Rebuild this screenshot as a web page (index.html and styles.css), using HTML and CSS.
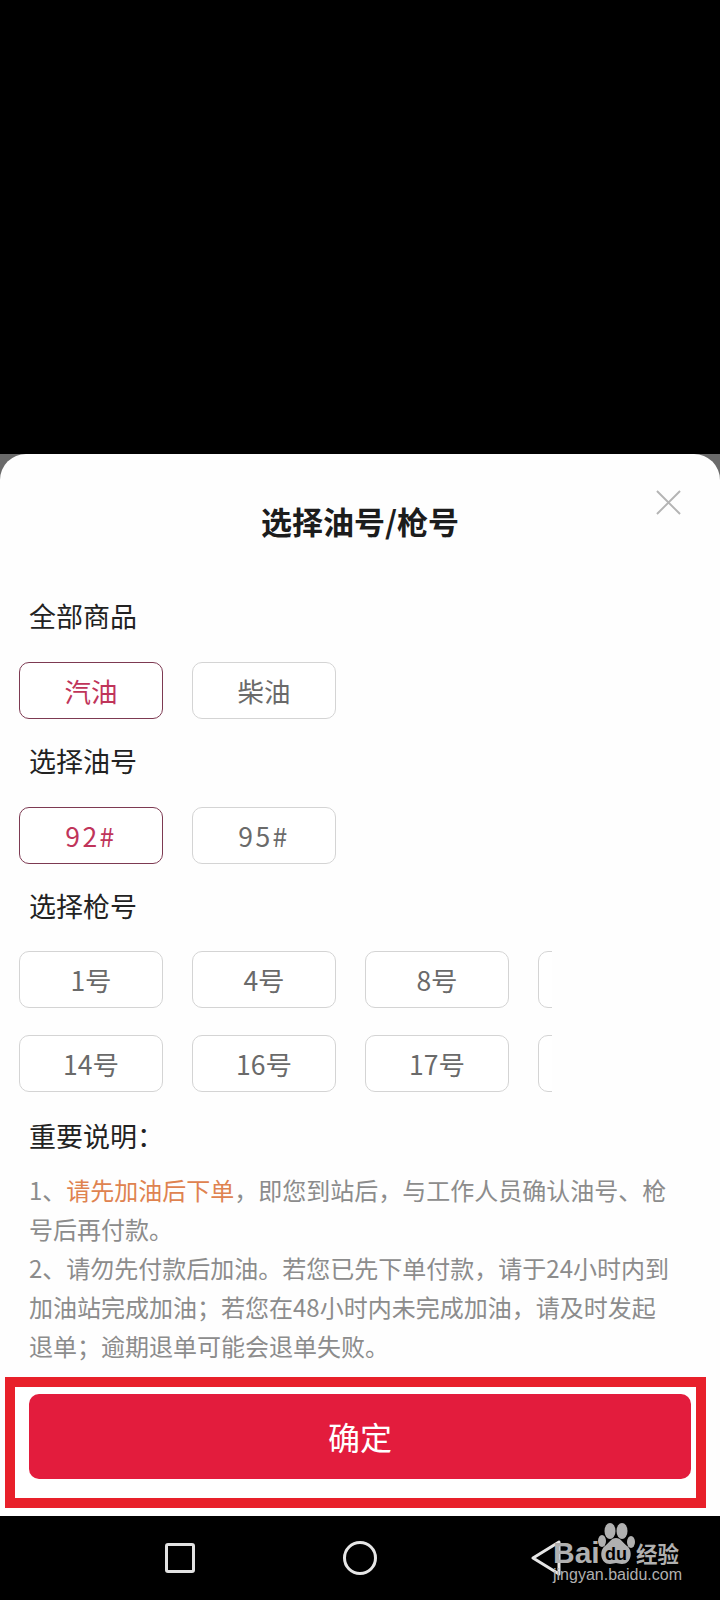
FILE: index.html
```html
<!DOCTYPE html>
<html lang="zh-CN">
<head>
<meta charset="utf-8">
<title>选择油号/枪号</title>
<link rel="stylesheet" href="styles.css">
</head>
<body>
<div class="screen">
  <div class="top"></div>
  <div class="sheet-wrap">
    <main class="sheet">
      <svg class="close" viewBox="0 0 26 26" aria-label="关闭"><path d="M1 1 25 25M25 1 1 25"/></svg>
      <h1 class="title">选择油号/枪号</h1>

      <h2 class="label label-first">全部商品</h2>
      <div class="options">
        <div class="opt opt-on">汽油</div>
        <div class="opt">柴油</div>
      </div>

      <h2 class="label label-second">选择油号</h2>
      <div class="options">
        <div class="opt opt-on opt-wide">92#</div>
        <div class="opt opt-wide">95#</div>
      </div>

      <h2 class="label label-third">选择枪号</h2>
      <div class="options options-guns">
        <div class="opt">1号</div>
        <div class="opt">4号</div>
        <div class="opt">8号</div>
        <div class="opt"></div>
        <div class="opt">14号</div>
        <div class="opt">16号</div>
        <div class="opt">17号</div>
        <div class="opt"></div>
      </div>

      <h2 class="label label-notes">重要说明：</h2>
      <div class="notes">
        <p>1、<span class="hl">请先加油后下单</span>，即您到站后，与工作人员确认油号、枪号后再付款。</p>
        <p>2、请勿先付款后加油。若您已先下单付款，请于24小时内到加油站完成加油；若您在48小时内未完成加油，请及时发起退单；逾期退单可能会退单失败。</p>
      </div>

      <div class="mark">
        <button class="ok">确定</button>
      </div>
    </main>
  </div>
  <nav class="nav">
    <span class="nav-square"></span>
    <span class="nav-circle"></span>
    <svg class="nav-back" viewBox="0 0 30 36"><path d="M2 18 28 2V34Z"/></svg>
    <div class="wm">
      <div class="wm-logo">
        <span class="wm-bai">Bai</span>
        <span class="wm-paw">
          <svg viewBox="0 0 38 42"><ellipse cx="5" cy="18" rx="4" ry="6"/><ellipse cx="13" cy="8" rx="5.5" ry="8"/><ellipse cx="25" cy="8" rx="5.5" ry="8"/><ellipse cx="34" cy="19" rx="4" ry="6"/><path d="M19 15c5 0 7 5 11 8 6 4 5 18-5 18-3 0-4-1-6-1s-3 1-6 1C3 41 2 27 8 23c4-3 6-8 11-8Z"/></svg>
          <span class="wm-du">du</span>
        </span>
        <span class="wm-cn">经验</span>
      </div>
      <div class="wm-url">jingyan.baidu.com</div>
    </div>
  </nav>
</div>
</body>
</html>
```

FILE: styles.css
```css
* { box-sizing: border-box; }
html, body { margin: 0; padding: 0; background: #000; }
body { font-family: "Noto Sans CJK SC", "Noto Sans", sans-serif; }
.screen { width: 720px; height: 1600px; display: flex; flex-direction: column; overflow: hidden; }
.top { height: 454px; background: #000; }
.sheet-wrap { height: 1062px; background: #6a6a6a; }
.sheet { position: relative; height: 1062px; background: #fefefe; border-radius: 26px 26px 0 0; padding-top: 47px; overflow: hidden; }
.close { position: absolute; top: 36px; left: 656px; width: 25px; height: 25px; fill: none; stroke: #b4b4b4; stroke-width: 2; }
.title { margin: 0; font-size: 31px; line-height: 40px; font-weight: 700; color: #1c1c1c; text-align: center; }
.label { margin: 0 0 0 29px; font-size: 27px; line-height: 40px; font-weight: 400; color: #222; }
.label-first { margin-top: 55px; }
.label-second { margin-top: 22px; }
.label-third { margin-top: 22px; }
.label-notes { margin-top: 24px; }
.options { display: grid; grid-template-columns: repeat(4, 144px); column-gap: 29px; row-gap: 27px; width: 533px; margin: 26px 0 0 19px; overflow: hidden; }
.options-guns { margin-top: 25px; }
.opt { height: 57px; border: 1px solid #d4d4d4; border-radius: 10px; font-size: 26.5px; line-height: 55px; color: #6a6a6a; text-align: center; background: #fff; }
.opt-on { border-color: #7d3a52; color: #c0345a; }
.opt-wide { letter-spacing: 2.5px; }
.notes { margin: 14px 0 0; padding: 0 45px 0 29px; font-size: 24px; line-height: 39px; color: #8c8c8c; }
.notes p { margin: 0; }
.hl { color: #df8350; }
.mark { width: 701px; height: 131px; margin: 12px 0 0 5px; border: 10px solid #e8202a; padding: 7px 5px 0 14px; background: #fff; }
.ok { display: block; width: 662px; height: 85px; border: 0; border-radius: 10px; background: #e31c3d; color: #fff; font: 400 32px/85px "Noto Sans CJK SC", sans-serif; padding: 0; }
.nav { position: relative; height: 84px; background: #000; display: flex; align-items: center; padding-left: 165px; }
.nav-square { width: 30px; height: 30px; border: 3px solid #e2e2e2; border-radius: 3px; }
.nav-circle { width: 34px; height: 34px; border: 3px solid #e6e6e6; border-radius: 50%; margin-left: 148px; }
.nav-back { width: 30px; height: 36px; margin-left: 154px; fill: none; stroke: #e6e6e6; stroke-width: 3; stroke-linejoin: round; }
.wm { position: absolute; left: 553px; top: 7px; width: 130px; color: #b0b0b0; }
.wm-logo { display: flex; align-items: flex-end; height: 42px; }
.wm-bai { font: 700 30px/25px "Liberation Sans", sans-serif; width: 44px; }
.wm-paw { position: relative; display: block; width: 38px; height: 42px; fill: #b0b0b0; }
.wm-paw svg { display: block; width: 38px; height: 42px; }
.wm-du { position: absolute; left: 0; right: 0; top: 22px; font: 700 18px/19px "Liberation Sans", sans-serif; color: #000; text-align: center; }
.wm-cn { font-size: 21.5px; line-height: 24px; font-weight: 700; margin-left: 1px; white-space: nowrap; }
.wm-url { font: 400 16px/18px "Liberation Sans", sans-serif; margin-top: 1px; white-space: nowrap; }
```
